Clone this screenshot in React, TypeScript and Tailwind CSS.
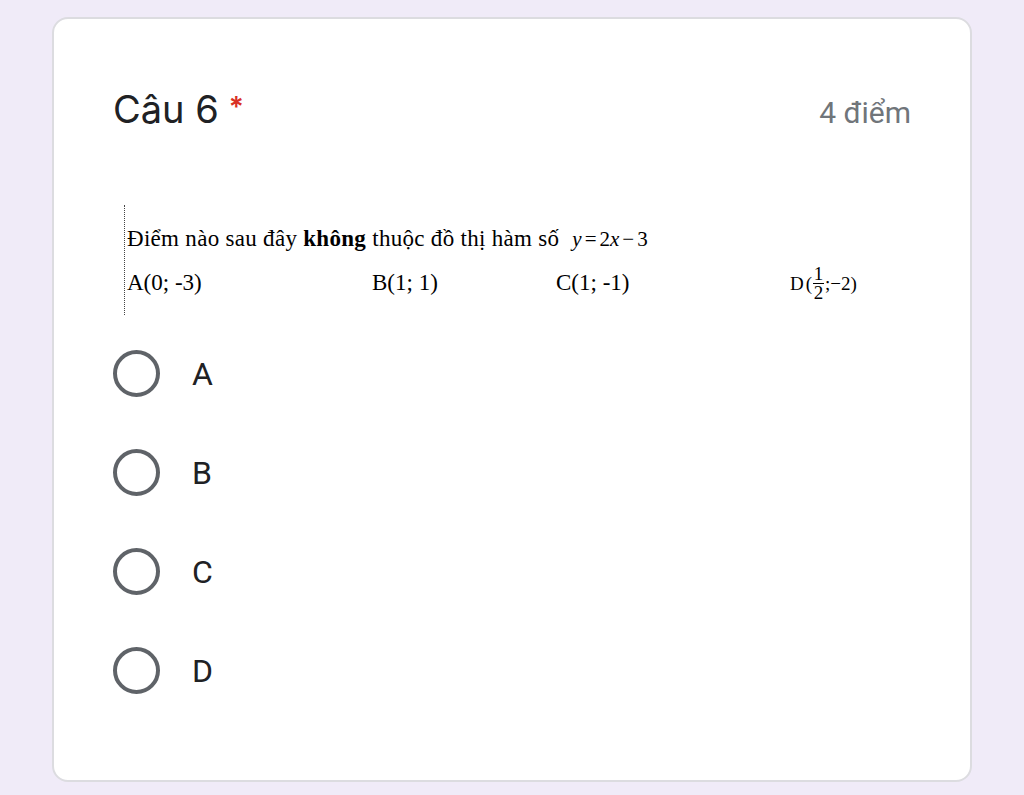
const OPTIONS = ["A", "B", "C", "D"];

function Radio({ label }: { label: string }) {
  return (
    <label className="flex items-center h-[99px]">
      <span className="w-[47px] h-[47px] rounded-full border-[4px] border-[#5f6368] shrink-0" />
      <span className="ml-[32px] text-[32px] text-[#202124] font-['Roboto',sans-serif]">{label}</span>
    </label>
  );
}

export default function App() {
  return (
    <div className="min-h-[795px] w-full bg-[#f0ebf8] pt-[17px] pl-[52px]">
      <div className="w-[920px] h-[765px] bg-white rounded-[16px] border-2 border-[#dcdce0] pl-[59px] pr-[59px]">
        {/* Header */}
        <div className="flex items-start justify-between pt-[66px]">
          <div className="flex items-start font-['Inter',sans-serif] text-[38px] leading-[48px] text-[#202124]">
            <span>Câu 6</span>
            <span className="ml-[10px] mt-[4px] text-[28px] leading-[36px] font-semibold text-[#d93025]">*</span>
          </div>
          <span className="mt-[8px] text-[30px] leading-[40px] text-[#70757a] font-['Roboto',sans-serif]">4 điểm</span>
        </div>

        {/* Question image */}
        <div className="mt-[72px] ml-[11px] w-[790px] h-[110px] border-l border-dotted border-[#444] pl-[2px] pt-[20px] font-['Liberation_Serif',serif] text-[23px] leading-[28px] text-black">
          <div className="flex items-baseline whitespace-nowrap">
            <span className="tracking-[0.3px]">
              Điểm nào sau đây <b>không</b> thuộc đồ thị hàm số
            </span>
            <span className="ml-[13px] text-[21px]">
              <i>y</i>
              <span className="mx-[3px]">=</span>2<i>x</i>
              <span className="mx-[3px]">−</span>3
            </span>
          </div>
          <div className="flex items-baseline mt-[12px] whitespace-nowrap">
            <span className="w-[245px] shrink-0">A(0; -3)</span>
            <span className="w-[184px] shrink-0">B(1; 1)</span>
            <span className="w-[234px] shrink-0">C(1; -1)</span>
            <span className="flex items-center text-[19px] shrink-0">
              D
              <span className="inline-flex items-center ml-[2px]">
                (
                <span className="inline-flex flex-col items-center leading-[18px] mx-[1px]">
                  <span>1</span>
                  <span className="w-[11px] border-t border-black" />
                  <span>2</span>
                </span>
                ;−2)
              </span>
            </span>
          </div>
        </div>

        {/* Choices */}
        <div className="mt-[9px] flex flex-col">
          {OPTIONS.map((o) => (
            <Radio key={o} label={o} />
          ))}
        </div>
      </div>
    </div>
  );
}
